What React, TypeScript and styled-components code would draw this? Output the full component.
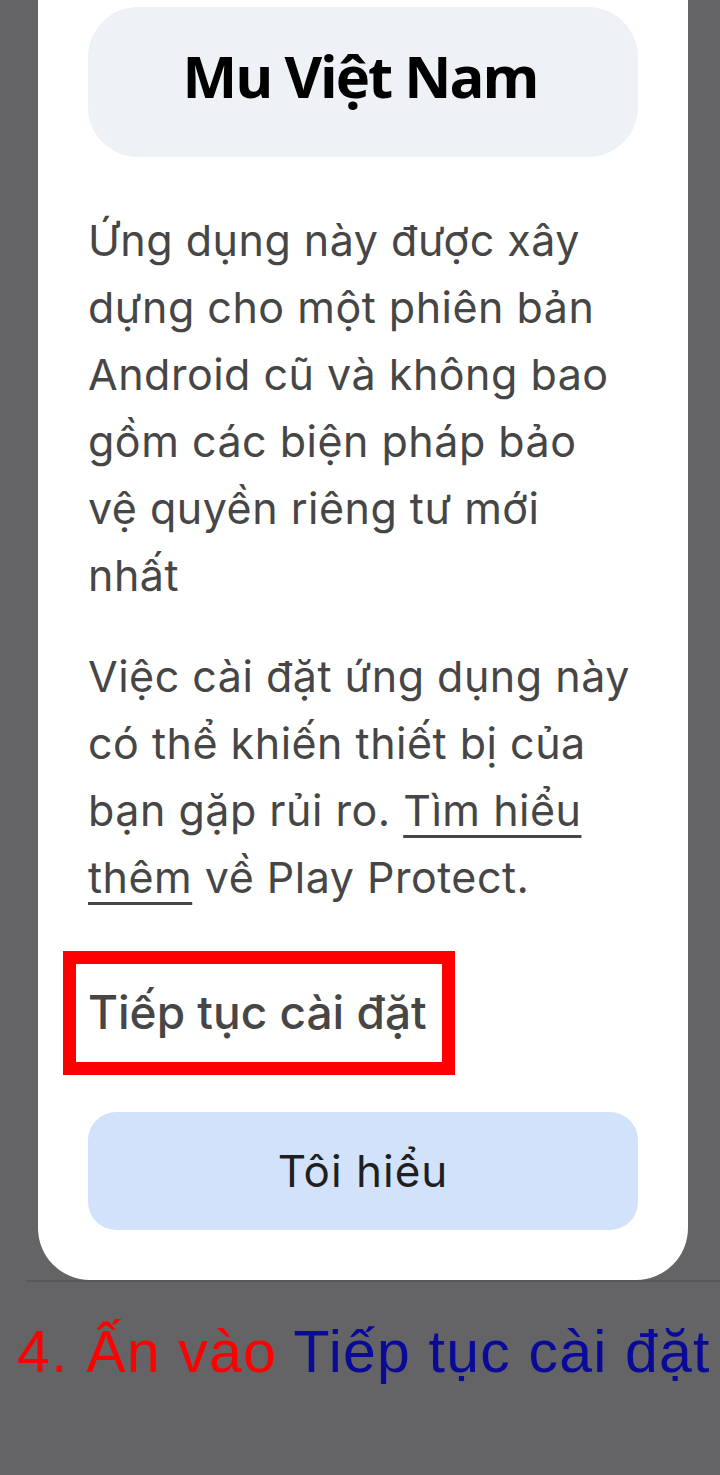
import React from 'react';
import styled, { createGlobalStyle } from 'styled-components';

const GlobalStyle = createGlobalStyle`
  html, body {
    margin: 0;
    padding: 0;
    background: #646466;
  }
  * {
    box-sizing: border-box;
  }
`;

export const Page = styled.div`
  width: 720px;
  height: 1475px;
  background-color: #646466;
  overflow: hidden;
  display: flex;
  flex-direction: column;
`;

export const Sheet = styled.div`
  width: 650px;
  margin-left: 38px;
  background-color: #ffffff;
  border-radius: 0 0 52px 52px;
  padding: 7px 50px 50px;
  display: flex;
  flex-direction: column;
`;

export const TitlePill = styled.div`
  height: 150px;
  border-radius: 50px;
  background-color: #eef1f6;
  display: flex;
  align-items: center;
  justify-content: center;
  font-family: 'Open Sans', sans-serif;
  font-weight: 700;
  font-size: 58px;
  letter-spacing: -2px;
  color: #000000;
  padding: 0 6px 14px 0;
`;

export const Paragraph = styled.p<{ $top: number }>`
  margin: ${(p) => p.$top}px 0 0;
  font-family: Inter, sans-serif;
  font-size: 43px;
  letter-spacing: 0.5px;
  line-height: 67px;
  color: #464646;
  white-space: nowrap;
`;

export const LinkText = styled.span`
  text-decoration: underline;
  text-decoration-thickness: 3px;
  text-underline-offset: 9px;
`;

export const Highlight = styled.div`
  margin: 40px 0 0 -25px;
  width: 392px;
  height: 124px;
  border: 13px solid #ff0000;
  display: flex;
  align-items: center;
  padding-left: 12px;
`;

export const TextButton = styled.span`
  font-family: Inter, sans-serif;
  font-weight: 500;
  font-size: 46px;
  color: #464646;
  padding-bottom: 2px;
`;

export const PrimaryButton = styled.div`
  margin-top: 37px;
  height: 118px;
  border-radius: 28px;
  background-color: #d3e2fb;
  display: flex;
  align-items: center;
  justify-content: center;
  font-family: Inter, sans-serif;
  font-size: 44px;
  letter-spacing: 1px;
  color: #1f1f1f;
`;

export const Divider = styled.div`
  margin-left: 27px;
  height: 2px;
  background-color: #58585c;
`;

export const Caption = styled.div`
  margin-top: 40px;
  padding-left: 17px;
  font-family: 'Liberation Sans', Arial, sans-serif;
  font-size: 59px;
  letter-spacing: 1.2px;
  line-height: 60px;
  white-space: nowrap;
`;

export const Tone = styled.span<{ $color: string }>`
  color: ${(p) => p.$color};
`;

export default function App() {
  return (
    <>
      <GlobalStyle />
      <Page>
        <Sheet>
          <TitlePill>Mu Việt Nam</TitlePill>
          <Paragraph $top={50}>
            Ứng dụng này được xây
            <br />
            dựng cho một phiên bản
            <br />
            Android cũ và không bao
            <br />
            gồm các biện pháp bảo
            <br />
            vệ quyền riêng tư mới
            <br />
            nhất
          </Paragraph>
          <Paragraph $top={34}>
            Việc cài đặt ứng dụng này
            <br />
            có thể khiến thiết bị của
            <br />
            bạn gặp rủi ro. <LinkText>Tìm hiểu</LinkText>
            <br />
            <LinkText>thêm</LinkText> về Play Protect.
          </Paragraph>
          <Highlight>
            <TextButton>Tiếp tục cài đặt</TextButton>
          </Highlight>
          <PrimaryButton>Tôi hiểu</PrimaryButton>
        </Sheet>
        <Divider />
        <Caption>
          <Tone $color="#ff0000">4. Ấn vào </Tone>
          <Tone $color="#0a0a99">Tiếp tục cài đặt</Tone>
        </Caption>
      </Page>
    </>
  );
}
